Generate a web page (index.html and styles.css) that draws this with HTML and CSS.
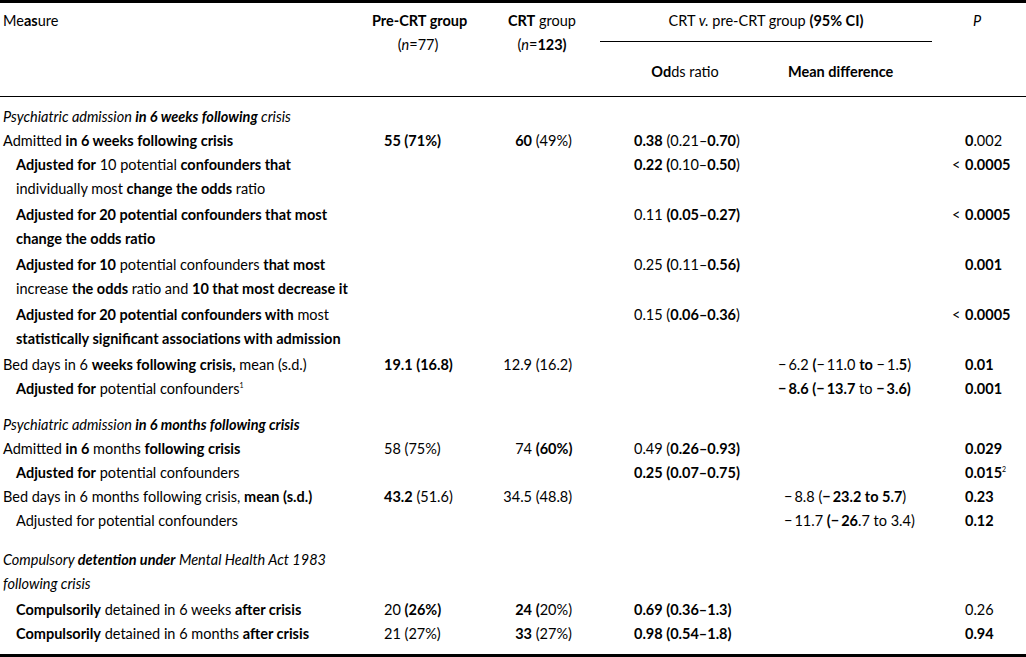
FILE: index.html
```html
<!DOCTYPE html>
<html lang="en">
<head>
<meta charset="utf-8">
<title>CRT v. pre-CRT group</title>
<link rel="stylesheet" href="styles.css">
</head>
<body>
<table class="tbl">
  <colgroup>
    <col class="w1"><col class="w2"><col class="w3"><col class="w4"><col class="w5"><col class="w6">
  </colgroup>
  <thead>
    <tr>
      <th rowspan="2" class="h-measure">Me<b>as</b>ure</th>
      <th rowspan="2" class="h-pre"><b>Pre-CRT group</b><br>(<i>n</i>=77)</th>
      <th rowspan="2" class="h-crt"><b>CRT</b> group<br>(<i>n</i>=<b>123)</b></th>
      <th colspan="2" class="h-span">CRT <i>v.</i> pre-CRT group <b>(95% CI)</b></th>
      <th rowspan="2" class="h-p"><i>P</i></th>
    </tr>
    <tr>
      <th class="h-or"><b>Od</b>ds ratio</th>
      <th class="h-md"><b>Mean difference</b></th>
    </tr>
  </thead>
  <tbody>
    <tr class="first">
      <td class="c1 sec"><i>Psychiatric admission <b>in 6 weeks following</b> crisis</i></td>
      <td></td><td></td><td></td><td></td><td></td>
    </tr>
    <tr>
      <td class="c1">Admitted <b>in 6 weeks following crisis</b></td>
      <td class="c2"><b>55 (71%)</b></td>
      <td class="c3"><span class="num"><b>60</b></span> (49%)</td>
      <td class="c4"><b>0.38</b> (0.21–<b>0.70</b>)</td>
      <td class="c5"></td>
      <td class="c6"><b>0</b>.002</td>
    </tr>
    <tr class="dbl">
      <td class="c1 ind"><b>Adjusted for</b> 10 potential <b>confounders that</b><br>individually most <b>change the odds</b> ratio</td>
      <td></td><td></td>
      <td class="c4"><b>0.22 (</b>0.10–<b>0.50</b>)</td>
      <td></td>
      <td class="c6"><span class="lt">&lt;</span><b>0.0005</b></td>
    </tr>
    <tr class="dbl">
      <td class="c1 ind"><b>Adjusted for 20 potential confounders that most<br>change the odds ratio</b></td>
      <td></td><td></td>
      <td class="c4">0.11 <b>(0.05–0.27)</b></td>
      <td></td>
      <td class="c6"><span class="lt">&lt;</span><b>0.0005</b></td>
    </tr>
    <tr class="dbl">
      <td class="c1 ind"><b>Adjusted for 10</b> potential confounders <b>that most</b><br>increase <b>the odds</b> ratio and <b>10 that most decrease it</b></td>
      <td></td><td></td>
      <td class="c4">0.25 <b>(</b>0.11–<b>0.56)</b></td>
      <td></td>
      <td class="c6"><b>0.001</b></td>
    </tr>
    <tr class="dbl">
      <td class="c1 ind"><b>Adjusted for 20 potential confounders with</b> most<br><b>statistically significant associations with admission</b></td>
      <td></td><td></td>
      <td class="c4">0.15 (<b>0.06–0.36</b>)</td>
      <td></td>
      <td class="c6"><span class="lt">&lt;</span><b>0.0005</b></td>
    </tr>
    <tr>
      <td class="c1">Bed days in 6 <b>weeks following crisis,</b> mean (s.d.)</td>
      <td class="c2"><b>19.1 (16.8)</b></td>
      <td class="c3"><span class="num">12.9</span> (16.2)</td>
      <td></td>
      <td class="c5"><span class="m">−</span>6.2 <b>(</b><span class="m">−</span>11.0 <b>to</b> <span class="m">−</span>1.<b>5</b>)</td>
      <td class="c6"><b>0.01</b></td>
    </tr>
    <tr>
      <td class="c1 ind"><b>Adjusted for</b> potential confounders<sup>1</sup></td>
      <td></td><td></td><td></td>
      <td class="c5"><b><span class="m">−</span>8.6 (<span class="m">−</span>13.7</b> to <b><span class="m">−</span>3.6)</b></td>
      <td class="c6"><b>0.001</b></td>
    </tr>
    <tr class="sec2">
      <td class="c1 sec"><i>Psychiatric admission <b>in 6 months following crisis</b></i></td>
      <td></td><td></td><td></td><td></td><td></td>
    </tr>
    <tr>
      <td class="c1">Admitted <b>in 6</b> months <b>following crisis</b></td>
      <td class="c2">58 (75%)</td>
      <td class="c3"><span class="num">74</span> <b>(60%)</b></td>
      <td class="c4">0.49 (<b>0.26–0.93)</b></td>
      <td></td>
      <td class="c6"><b>0.029</b></td>
    </tr>
    <tr>
      <td class="c1 ind"><b>Adjusted for</b> potential confounders</td>
      <td></td><td></td>
      <td class="c4"><b>0.25 (0.07–0.75)</b></td>
      <td></td>
      <td class="c6"><b>0.015</b><sup>2</sup></td>
    </tr>
    <tr>
      <td class="c1">Bed days in 6 months following crisis, <b>mean (s.d.)</b></td>
      <td class="c2"><b>43.2</b> (51.6)</td>
      <td class="c3"><span class="num">34.5</span> (48.8)</td>
      <td></td>
      <td class="c5 in"><span class="m">−</span>8.8 (<b><span class="m">−</span>23.2 to 5.7</b>)</td>
      <td class="c6"><b>0.23</b></td>
    </tr>
    <tr>
      <td class="c1 ind">Adjusted for potential confounders</td>
      <td></td><td></td><td></td>
      <td class="c5 in"><span class="m">−</span>11.7 <b>(<span class="m">−</span>26</b>.7 to 3.4)</td>
      <td class="c6"><b>0.12</b></td>
    </tr>
    <tr class="sec3 dbl">
      <td class="c1 sec"><i>Compulsory <b>detention under</b> Mental Health Act 1983<br>following crisis</i></td>
      <td></td><td></td><td></td><td></td><td></td>
    </tr>
    <tr>
      <td class="c1 ind"><b>Compulsorily</b> detained in 6 weeks <b>after crisis</b></td>
      <td class="c2">20 <b>(26%)</b></td>
      <td class="c3"><span class="num"><b>24</b></span> <b>(</b>20%)</td>
      <td class="c4"><b>0.69 (0.36–1.3)</b></td>
      <td></td>
      <td class="c6">0.26</td>
    </tr>
    <tr class="last">
      <td class="c1 ind"><b>Compulsorily</b> detained in 6 months <b>after crisis</b></td>
      <td class="c2">21 (27%)</td>
      <td class="c3"><span class="num"><b>33</b></span> (27%)</td>
      <td class="c4"><b>0.98 (0.54–1.8)</b></td>
      <td></td>
      <td class="c6"><b>0.94</b></td>
    </tr>
  </tbody>
</table>
</body>
</html>
```
FILE: styles.css
```css
html, body {
  margin: 0;
  padding: 0;
  background: #fff;
}

body {
  font-family: Lato, "Liberation Sans", sans-serif;
  font-size: 14.5px;
  color: #000;
}

b { font-weight: 700; }

.tbl {
  width: 1026px;
  table-layout: fixed;
  border-collapse: separate;
  border-spacing: 0;
  border-top: 3px solid #000;
  border-bottom: 3px solid #000;
}

.w1 { width: 372px; }
.w2 { width: 128px; }
.w3 { width: 100px; }
.w4 { width: 170px; }
.w5 { width: 162px; }
.w6 { width: 94px; }

th, td {
  padding: 0;
  line-height: 24px;
  white-space: nowrap;
  text-align: left;
  vertical-align: top;
  font-weight: 400;
}

thead th {
  border-bottom: 1px solid #000;
  padding-top: 6px;
}

thead th.h-span {
  padding-bottom: 8px;
  text-align: center;
}

.h-measure { padding-left: 3px; }
.h-pre { text-align: center; padding-right: 36px; }
.h-crt { text-align: center; padding-right: 16px; }
.h-p { padding-left: 41px; }

thead th.h-or,
thead th.h-md {
  padding-top: 18px;
  padding-bottom: 12px;
}
.h-or { text-align: center; }
.h-md { padding-left: 18px; }

tbody tr.first td { padding-top: 8px; }
tbody tr.dbl td { padding-bottom: 2px; }
tbody tr.sec2 td { padding-top: 12px; }
tbody tr.sec3 td { padding-top: 15px; }
tbody tr.last td { padding-bottom: 8px; }

.c1 { padding-left: 3px; }
.c1.ind { padding-left: 16px; }
.c2 { padding-left: 12px; }
.c3 { padding-left: 2px; }
.c4 { padding-left: 34px; }
.c5 { padding-left: 8px; }
.c5.in { padding-left: 14px; }
.c6 { padding-left: 33px; }

.num {
  display: inline-block;
  width: 30px;
  text-align: right;
}

.m {
  margin-right: 2px;
}

.lt {
  display: inline-block;
  width: 13px;
  margin-left: -13px;
}

sup {
  font-size: 7px;
  line-height: 0;
  vertical-align: 6px;
}
```
